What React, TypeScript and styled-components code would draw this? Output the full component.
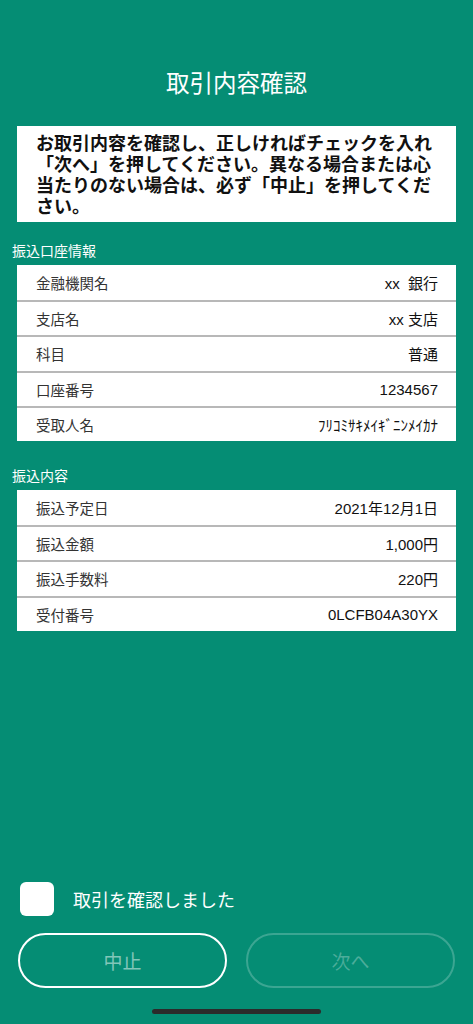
import React, { useState } from "react";
import styled, { createGlobalStyle } from "styled-components";

const GlobalStyle = createGlobalStyle`
  html, body {
    margin: 0;
    padding: 0;
    background: #058d74;
  }
  * { box-sizing: border-box; }
  body {
    font-family: "Liberation Sans", "Noto Sans CJK JP", sans-serif;
    -webkit-font-smoothing: antialiased;
  }
`;

const Page = styled.div`
  height: 1024px;
  display: flex;
  flex-direction: column;
  background: #058d74;
  padding: 64px 17px 10px 17px;
`;

const Title = styled.h1`
  margin: 0;
  font-size: 23.5px;
  line-height: 36px;
  font-weight: 400;
  color: #fff;
  text-align: center;
  font-family: "Noto Sans CJK JP", sans-serif;
`;

const Notice = styled.div`
  margin-top: 26px;
  background: #fff;
  padding: 6px 20px 6px 19px;
  font-family: "Noto Sans CJK JP", sans-serif;
  font-weight: 700;
  font-size: 18px;
  line-height: 21px;
  color: #111;
`;

const SectionLabel = styled.div<{ $top: number }>`
  margin: ${(p) => p.$top}px 0 5px -5px;
  font-family: "Noto Sans CJK JP", sans-serif;
  font-size: 14px;
  line-height: 20px;
  color: #fff;
`;

const Table = styled.div`
  background: #fff;
  display: flex;
  flex-direction: column;
`;

const Row = styled.div`
  height: 35.2px;
  display: flex;
  align-items: center;
  justify-content: space-between;
  padding: 0 18px 0 19px;
  & + & {
    border-top: 2px solid #b8b8b8;
  }
`;

const Label = styled.span`
  font-family: "Noto Sans CJK JP", sans-serif;
  font-size: 14.5px;
  color: #333;
`;

const Value = styled.span`
  font-size: 15px;
  color: #111;
  white-space: pre;
`;

const Footer = styled.div`
  margin-top: auto;
  display: flex;
  flex-direction: column;
`;

const CheckRow = styled.label`
  display: flex;
  align-items: center;
  gap: 19px;
  padding-left: 3px;
  cursor: pointer;
`;

const CheckBox = styled.span`
  width: 34px;
  height: 34px;
  border-radius: 6px;
  background: #fff;
  display: flex;
  align-items: center;
  justify-content: center;
  color: #058d74;
  font-size: 22px;
`;

const CheckText = styled.span`
  font-family: "Noto Sans CJK JP", sans-serif;
  font-size: 18px;
  color: #fff;
`;

const ButtonRow = styled.div`
  margin-top: 17px;
  display: grid;
  grid-template-columns: 1fr 1fr;
  gap: 19px;
  padding: 0 1px;
`;

const PillButton = styled.button<{ $faded?: boolean }>`
  height: 55px;
  border-radius: 28px;
  background: transparent;
  border: 2px solid ${(p) => (p.$faded ? "rgba(255,255,255,0.22)" : "#fff")};
  color: ${(p) => (p.$faded ? "rgba(255,255,255,0.28)" : "rgba(255,255,255,0.5)")};
  font-family: "Noto Sans CJK JP", sans-serif;
  font-size: 19px;
  cursor: pointer;
`;

const HomeBar = styled.div`
  margin: 21px auto 0;
  width: 169px;
  height: 5px;
  border-radius: 3px;
  background: #2b2b2b;
`;

const account = [
  ["金融機関名", "xx  銀行"],
  ["支店名", "xx 支店"],
  ["科目", "普通"],
  ["口座番号", "1234567"],
  ["受取人名", "ﾌﾘｺﾐｻｷﾒｲｷﾞﾆﾝﾒｲｶﾅ"],
];

const transfer = [
  ["振込予定日", "2021年12月1日"],
  ["振込金額", "1,000円"],
  ["振込手数料", "220円"],
  ["受付番号", "0LCFB04A30YX"],
];

export default function App() {
  const [checked, setChecked] = useState(false);
  return (
    <>
      <GlobalStyle />
      <Page>
        <Title>取引内容確認</Title>
        <Notice>
          お取引内容を確認し、正しければチェックを入れ「次へ」を押してください。異なる場合または心当たりのない場合は、必ず「中止」を押してください。
        </Notice>

        <SectionLabel $top={18}>振込口座情報</SectionLabel>
        <Table>
          {account.map(([l, v]) => (
            <Row key={l}>
              <Label>{l}</Label>
              <Value>{v}</Value>
            </Row>
          ))}
        </Table>

        <SectionLabel $top={24}>振込内容</SectionLabel>
        <Table>
          {transfer.map(([l, v]) => (
            <Row key={l}>
              <Label>{l}</Label>
              <Value>{v}</Value>
            </Row>
          ))}
        </Table>

        <Footer>
          <CheckRow onClick={() => setChecked(!checked)}>
            <CheckBox>{checked ? "✓" : ""}</CheckBox>
            <CheckText>取引を確認しました</CheckText>
          </CheckRow>
          <ButtonRow>
            <PillButton>中止</PillButton>
            <PillButton $faded>次へ</PillButton>
          </ButtonRow>
          <HomeBar />
        </Footer>
      </Page>
    </>
  );
}
